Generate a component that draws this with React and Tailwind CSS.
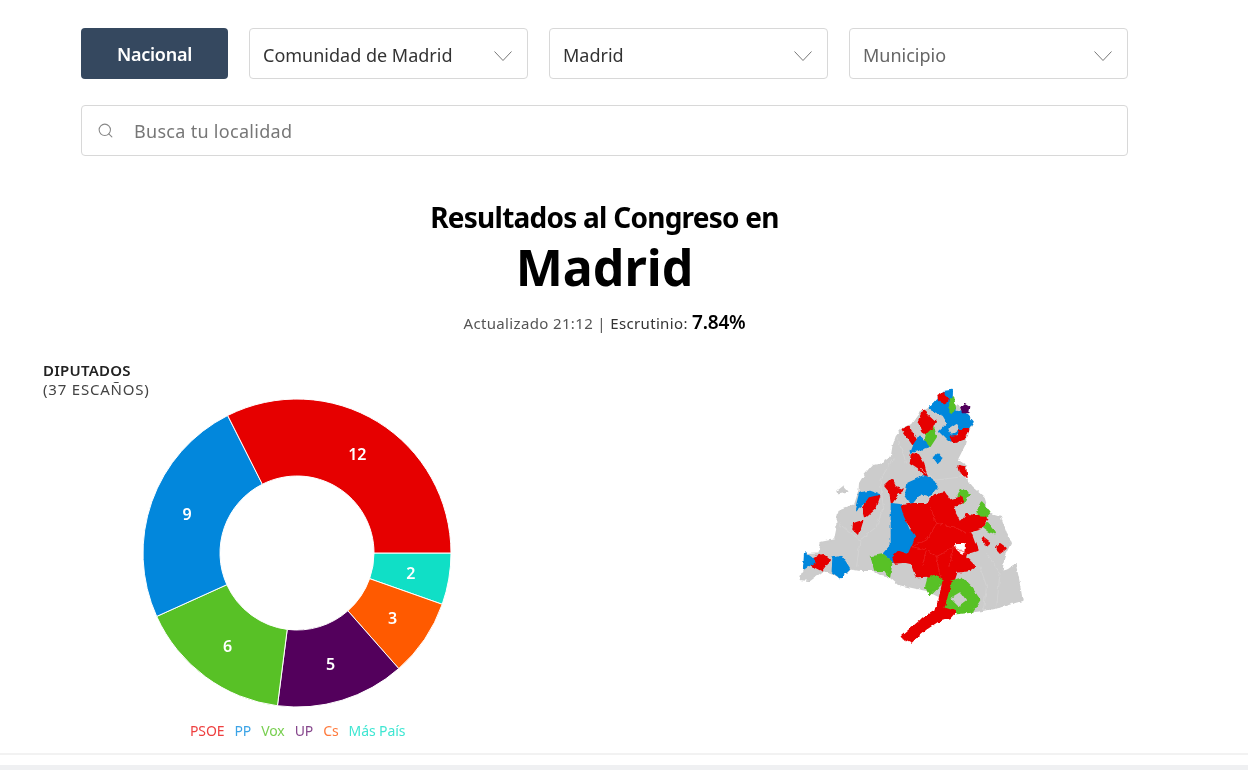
import { Search } from "lucide-react";

const PARTIES = [
  { name: "Más País", seats: 2, color: "#10dfc6", text: "text-[#3fe6d2]" },
  { name: "Cs", seats: 3, color: "#ff5a00", text: "text-[#ff7a3c]" },
  { name: "UP", seats: 5, color: "#53005c", text: "text-[#86468c]" },
  { name: "Vox", seats: 6, color: "#58c126", text: "text-[#78cf50]" },
  { name: "PP", seats: 9, color: "#0287dc", text: "text-[#3ba3e6]" },
  { name: "PSOE", seats: 12, color: "#e60000", text: "text-[#ee4040]" },
];

const LEGEND = [...PARTIES].reverse();

const GRAY = "#cccccc";
const RED = "#e60000";
const BLUE = "#0287dc";
const GREEN = "#58c126";

const MAP_SHAPES = [
  [GRAY, "M445 85 420 100 395 135 370 145 350 170 340 200 335 232 300 255 278 258 255 285 240 310 238 335 225 375 178 392 172 420 172 445 165 480 125 488 118 520 78 522 72 565 62 598 90 600 130 570 155 580 180 590 210 565 240 570 280 570 305 585 330 590 355 612 400 622 440 630 480 650 490 690 560 695 610 690 660 680 725 660 715 600 705 555 685 570 665 575 670 530 690 490 680 465 660 410 625 400 610 350 575 320 550 290 560 260 530 240 555 190 565 150 578 125 550 95 520 70Z"],
  [GRAY, "M172 333 188 320 202 335 175 340Z"],
  [BLUE, "M447 85 475 55 495 35 516 32 515 65 530 95 555 100 578 125 563 150 530 160 510 185 480 155 505 130 490 105Z"],
  [RED, "M475 50 490 40 503 62 490 70Z"],
  [GREEN, "M510 60 520 52 525 85 512 100Z"],
  ["#53005c", "M543 82 553 72 568 80 565 97 548 97Z"],
  [RED, "M512 170 535 168 540 150 565 150 555 175 520 188Z"],
  ["#cccccc", "M508 150 530 135 535 145 515 160Z"],
  [RED, "M430 92 465 125 445 165 430 155 416 125Z"],
  [RED, "M368 148 385 140 408 180 398 192Z"],
  [GREEN, "M460 145 468 170 450 198 435 185 440 165Z"],
  [BLUE, "M420 170 445 200 420 208 395 215 405 190Z"],
  [BLUE, "M472 222 484 235 472 246 464 235Z"],
  [RED, "M395 222 415 225 430 250 440 290 415 265 392 250Z"],
  [RED, "M535 258 555 262 560 290 540 278Z"],
  [BLUE, "M425 292 455 295 470 320 450 345 420 340 395 370 378 345 385 310Z"],
  [RED, "M316 318 335 300 345 320 368 330 350 345 335 368 330 335Z"],
  [BLUE, "M240 340 270 335 298 345 270 360 250 370 228 388Z"],
  [RED, "M268 355 298 348 285 385 255 412 248 385Z"],
  [RED, "M222 430 247 422 235 462 220 448Z"],
  [GREEN, "M545 328 567 342 550 368 535 350Z"],
  [GREEN, "M605 370 628 395 610 415 592 395Z"],
  [GREEN, "M622 432 645 460 625 450 612 440Z"],
  [RED, "M608 475 628 490 620 497Z"],
  [RED, "M660 492 677 505 660 518 648 505Z"],
  [BLUE, "M335 372 360 375 385 450 412 465 395 500 390 530 345 545 312 520 335 495Z"],
  [RED, "M365 378 400 372 440 372 465 345 495 340 510 362 545 352 550 365 520 378 525 400 540 430 562 405 610 410 622 420 600 445 570 455 590 510 560 520 555 530 585 560 570 570 530 575 520 605 490 608 445 590 410 592 395 550 375 545 345 548 340 530 355 515 385 525 410 470 390 440 375 410Z"],
  ["#ffffff", "M528 495 552 495 550 518 535 510Z"],
  [GREEN, "M275 532 310 525 335 545 328 590 315 570 285 570Z"],
  [GREEN, "M445 595 465 588 490 605 465 630 450 645 438 620Z"],
  [GREEN, "M512 605 545 595 575 625 598 660 575 695 530 700 490 685 505 650Z"],
  ["#cccccc", "M515 655 540 640 555 660 535 675Z"],
  [RED, "M490 605 512 605 500 650 490 685 525 695 510 712 470 725 440 745 410 770 395 785 365 770 395 745 430 715 465 695 478 660Z"],
  [BLUE, "M160 535 185 530 207 565 180 592 158 575Z"],
  [RED, "M105 532 130 525 147 540 125 570 95 555Z"],
  [BLUE, "M75 520 95 535 105 545 72 565Z"],
];

// thin municipality borders drawn over the filled shapes
const MAP_BORDERS = [
  ["#ec2a2a", "M395 500 440 510 470 530 520 500 560 520M440 510 425 560M470 530 480 590M520 500 510 560M450 380 470 430 520 440 560 460M470 430 440 480 395 500"],
  ["#d6d6d6", "M340 235 300 300 310 380 290 440 240 480 230 560M175 430 240 480M620 520 660 580 650 680M600 560 620 620 610 690M420 265 470 300 550 290M350 170 380 250"],
];

function polar(r, deg) {
  const a = (deg * Math.PI) / 180;
  return [155 + r * Math.cos(a), 155 + r * Math.sin(a)];
}

function slicePath(start, end) {
  const [x1, y1] = polar(154, start);
  const [x2, y2] = polar(154, end);
  const [x3, y3] = polar(77, end);
  const [x4, y4] = polar(77, start);
  const large = end - start > 180 ? 1 : 0;
  return `M${x1} ${y1}A154 154 0 ${large} 1 ${x2} ${y2}L${x3} ${y3}A77 77 0 ${large} 0 ${x4} ${y4}Z`;
}

function Donut() {
  const total = PARTIES.reduce((sum, p) => sum + p.seats, 0);
  let angle = 0;
  return (
    <svg width="310" height="310" viewBox="0 0 310 310" className="block">
      {PARTIES.map((p) => {
        const start = angle;
        const end = angle + (p.seats / total) * 360;
        angle = end;
        const [lx, ly] = polar(116, (start + end) / 2);
        return (
          <g key={p.name}>
            <path d={slicePath(start, end)} fill={p.color} stroke="#ffffff" strokeWidth="1" />
            <text x={lx - 0.5} y={ly + 6} textAnchor="middle" fill="#ffffff" className="text-[16px] font-semibold">
              {p.seats}
            </text>
          </g>
        );
      })}
    </svg>
  );
}

function SelectBox({ label, muted }) {
  return (
    <div className="flex h-[51px] flex-1 items-center justify-between rounded-[4px] border border-[#d8d8d8] bg-white pl-[13px] pr-[14px]">
      <span className={`pt-[3px] text-[18px] ${muted ? "text-[#666666]" : "text-[#333333]"}`}>{label}</span>
      <svg width="20" height="12" viewBox="0 0 20 12" fill="none" className="mt-[4px] text-[#777777]">
        <path d="M1.5 1.5 10 10.5 18.5 1.5" stroke="currentColor" strokeWidth="1" />
      </svg>
    </div>
  );
}

function RegionMap() {
  return (
    <svg width="260" height="270" viewBox="0 0 780 810" className="ml-[222px] mt-[19px] block shrink-0">
      <defs>
        <filter id="rough" x="-5%" y="-5%" width="110%" height="110%">
          <feTurbulence type="fractalNoise" baseFrequency="0.06" numOctaves="2" seed="4" />
          <feDisplacementMap in="SourceGraphic" scale="12" xChannelSelector="R" yChannelSelector="G" />
          <feGaussianBlur stdDeviation="1.2" />
        </filter>
      </defs>
      <g filter="url(#rough)">
        {MAP_SHAPES.map(([fill, d], i) => (
          <path key={i} d={d} fill={fill} stroke={fill} strokeWidth="6" strokeLinejoin="round" />
        ))}
        {MAP_BORDERS.map(([stroke, d], i) => (
          <path key={i} d={d} fill="none" stroke={stroke} strokeWidth="2" />
        ))}
      </g>
    </svg>
  );
}

export default function App() {
  return (
    <div className="relative h-[770px] w-[1248px] overflow-hidden bg-white font-['Noto_Sans',sans-serif] blur-[0.4px]">
      <div className="ml-[81px] w-[1047px] pt-[28px]">
        <div className="flex gap-[21px]">
          <button
            type="button"
            className="h-[51px] w-[147px] shrink-0 rounded-[4px] bg-[#35485f] pt-[1px] text-[18px] font-semibold tracking-[-0.25px] text-white"
          >
            Nacional
          </button>
          <SelectBox label="Comunidad de Madrid" />
          <SelectBox label="Madrid" />
          <SelectBox label="Municipio" muted />
        </div>
        <div className="mt-[26px] flex h-[51px] items-center rounded-[4px] border border-[#d8d8d8] bg-white pl-[15px]">
          <Search size={17} strokeWidth={1.5} className="text-[#888888]" />
          <span className="ml-[20px] pt-[2px] text-[18px] tracking-[0.3px] text-[#777777]">Busca tu localidad</span>
        </div>
        <div className="mt-[42px] text-center">
          <h1 className="text-[28px] leading-[38px] font-bold tracking-[-0.75px] text-black">Resultados al Congreso en</h1>
          <h2 className="text-[50px] leading-[62px] font-bold text-black">Madrid</h2>
          <p className="mt-[13px] text-[15px] leading-[22px] tracking-[0.35px] text-[#555555]">
            Actualizado 21:12 | <span className="text-[#333333]">Escrutinio:</span>{" "}
            <span className="text-[19px] font-semibold tracking-[-0.2px] text-black">7.84%</span>
          </p>
        </div>
      </div>
      <div className="mt-[27px] flex">
        <div className="ml-[43px] w-[515px]">
          <p className="text-[15px] leading-[19px] font-semibold tracking-[0.25px] text-[#222222]">DIPUTADOS</p>
          <p className="text-[15px] leading-[19px] tracking-[0.8px] text-[#444444]">(37 ESCAÑOS)</p>
          <div className="ml-[99px] mt-[-1px]">
            <Donut />
          </div>
          <div className="mt-[14px] ml-[147px] flex gap-[10px] text-[14px] leading-[18px] tracking-[-0.1px]">
            {LEGEND.map((p) => (
              <span key={p.name} className={p.text}>
                {p.name}
              </span>
            ))}
          </div>
        </div>
        <RegionMap />
      </div>
      <div className="absolute inset-x-0 top-[753px] h-[2px] bg-[#f2f2f2]" />
      <div className="absolute inset-x-0 top-[765px] h-[5px] bg-[#eff0f2]" />
    </div>
  );
}
